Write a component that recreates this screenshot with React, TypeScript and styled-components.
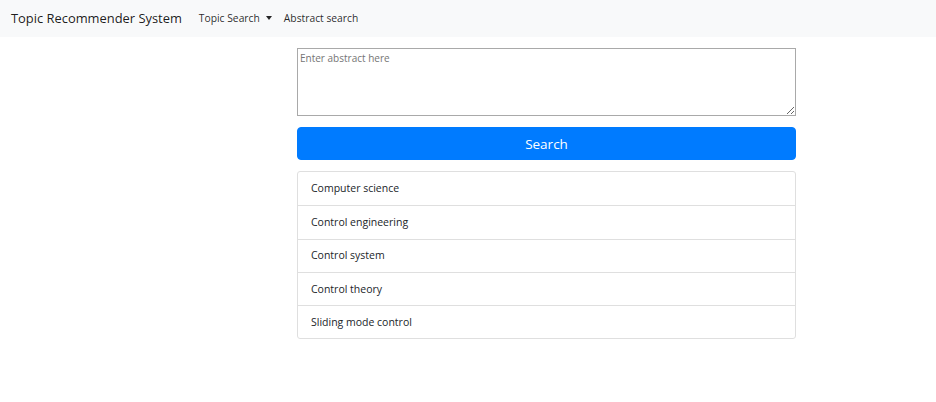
import React from "react";
import styled, { createGlobalStyle } from "styled-components";

const Global = createGlobalStyle`
  html, body { margin: 0; padding: 0; background: #fff; }
  body { font-family: "Open Sans", "Noto Sans", sans-serif; color: #212529; }
  * { box-sizing: border-box; }
`;

const Navbar = styled.nav`
  height: 37px;
  background: #f8f9fa;
  display: flex;
  align-items: center;
  padding: 0 11px 1px;
`;

const Brand = styled.span`
  font-size: 12.9px;
  color: rgba(0, 0, 0, 0.9);
  margin-right: 17px;
  white-space: nowrap;
`;

const NavLink = styled.span`
  font-size: 10.3px;
  color: rgba(0, 0, 0, 0.85);
  display: inline-flex;
  align-items: center;
  margin-right: 12px;
  white-space: nowrap;
`;

const Caret = styled.span`
  display: inline-block;
  margin-left: 6px;
  width: 0;
  height: 0;
  border-top: 4px solid rgba(0, 0, 0, 0.85);
  border-left: 3.5px solid transparent;
  border-right: 3.5px solid transparent;
`;

const Page = styled.main`
  display: grid;
  grid-template-columns: 297px 499px;
  padding-top: 11px;
`;

const Column = styled.div`
  grid-column: 2;
  display: flex;
  flex-direction: column;
  gap: 11px;
`;

const TextArea = styled.textarea`
  width: 499px;
  height: 68px;
  border: 1px solid #a9a9a9;
  border-radius: 0;
  padding: 2px 2px;
  font-family: "Open Sans", "Noto Sans", sans-serif;
  font-size: 10px;
  resize: vertical;
  display: block;
  &::placeholder { color: #757575; }
`;

const SearchButton = styled.button`
  height: 33px;
  width: 100%;
  background: #007bff;
  color: #fff;
  border: 1px solid #007bff;
  border-radius: 4px;
  font-family: "Open Sans", "Noto Sans", sans-serif;
  font-size: 13.5px;
  cursor: pointer;
`;

const ListGroup = styled.ul`
  list-style: none;
  margin: 0;
  padding: 0;
  border: 1px solid #dfdfdf;
  border-radius: 3px;
`;

const ListItem = styled.li`
  height: 33.3px;
  display: flex;
  align-items: center;
  padding: 0 13px 1px;
  font-size: 10.5px;
  color: #212529;
  & + & { border-top: 1px solid #dfdfdf; }
`;

const topics = [
  "Computer science",
  "Control engineering",
  "Control system",
  "Control theory",
  "Sliding mode control",
];

export default function App() {
  return (
    <>
      <Global />
      <Navbar>
        <Brand>Topic Recommender System</Brand>
        <NavLink>
          Topic Search
          <Caret />
        </NavLink>
        <NavLink>Abstract search</NavLink>
      </Navbar>
      <Page>
        <Column>
          <TextArea placeholder="Enter abstract here" />
          <SearchButton>Search</SearchButton>
          <ListGroup>
            {topics.map((t) => (
              <ListItem key={t}>{t}</ListItem>
            ))}
          </ListGroup>
        </Column>
      </Page>
    </>
  );
}
